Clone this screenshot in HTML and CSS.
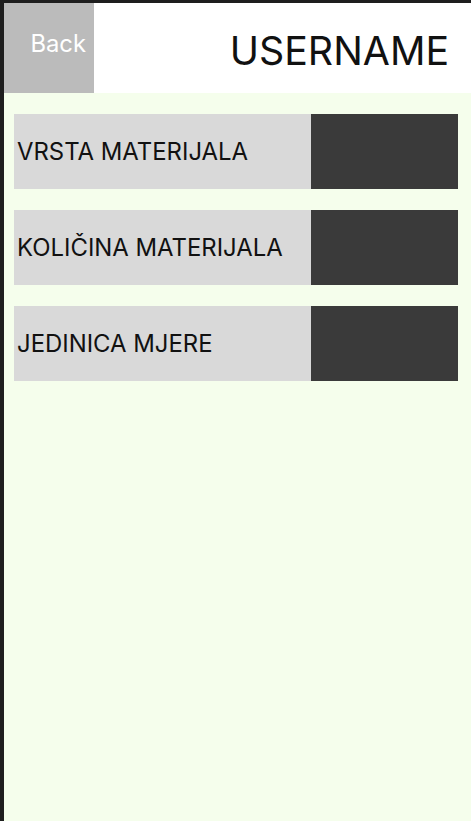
FILE: index.html
```
<!DOCTYPE html>
<html>
<head>
<meta charset="utf-8">
<link rel="stylesheet" href="styles.css">
</head>
<body>
<div class="screen">
  <header class="header">
    <div class="back">Back</div>
    <div class="title">USERNAME</div>
  </header>
  <main class="content">
    <div class="row"><div class="label">VRSTA MATERIJALA</div><div class="value"></div></div>
    <div class="row"><div class="label">KOLIČINA MATERIJALA</div><div class="value"></div></div>
    <div class="row"><div class="label">JEDINICA MJERE</div><div class="value"></div></div>
  </main>
</div>
</body>
</html>
```
FILE: styles.css
```
html, body {
  margin: 0;
  padding: 0;
  height: 100%;
}
body {
  background: #1e1e1e;
  font-family: Inter, "Liberation Sans", Arial, sans-serif;
}
.screen {
  margin: 3px 0 0 4px;
  height: calc(100% - 3px);
  background: #f5feec;
  display: flex;
  flex-direction: column;
}
.header {
  display: flex;
  height: 90px;
  background: #ffffff;
}
.back {
  width: 90px;
  background: #bbbbbb;
  color: #ffffff;
  font-size: 23.8px;
  display: flex;
  align-items: center;
  justify-content: flex-end;
  padding: 0 8px 10px 0;
  box-sizing: border-box;
}
.title {
  flex: 1;
  display: flex;
  align-items: center;
  justify-content: flex-end;
  padding: 4px 22px 0 0;
  font-size: 39.3px;
  color: #111111;
}
.content {
  display: flex;
  flex-direction: column;
  gap: 21px;
  padding: 21px 13px 0 10px;
}
.row {
  display: flex;
  height: 75px;
  background: #d9d9d9;
}
.label {
  flex: 1;
  display: flex;
  align-items: center;
  padding-left: 3px;
  font-size: 23.9px;
  color: #111111;
}
.value {
  width: 147px;
  background: #3a3a3a;
}
```
